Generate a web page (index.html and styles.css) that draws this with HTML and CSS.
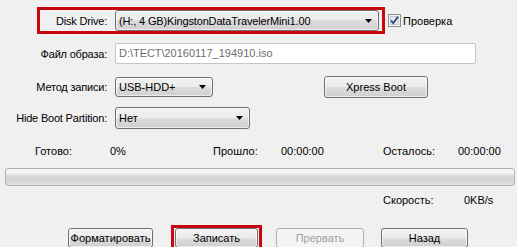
FILE: index.html
```html
<!DOCTYPE html>
<html lang="ru">
<head>
    <meta charset="UTF-8">
    <meta name="viewport" content="width=device-width, initial-scale=1.0">
    <title>Write Disk Image</title>
    <link rel="stylesheet" href="styles.css">
</head>
<body>
    <div class="window">
        <div class="row row-drive">
            <div class="frame">
                <span class="label label-short">Disk Drive:</span>
                <div class="combo combo-drive">
                    <span class="tight">(H:, 4 GB)KingstonDataTravelerMini1.00</span>
                    <svg class="arrow" width="7" height="4" viewBox="0 0 7 4"><path d="M0 0h7L3.5 4z"/></svg>
                </div>
            </div>
            <label class="check">
                <svg width="13" height="13" viewBox="0 0 13 13">
                    <rect x="0.5" y="0.5" width="12" height="12" fill="#f4f4f4" stroke="#8e8f8f"/>
                    <rect x="2.5" y="2.5" width="8" height="8" fill="#e8e8ea" stroke="#c3c6cb"/>
                    <path d="M3 6.5l2.2 2.5L10 2.8" fill="none" stroke="#21448c" stroke-width="1.8"/>
                </svg>
                <span>Проверка</span>
            </label>
        </div>

        <div class="row row-file">
            <span class="label">Файл образа:</span>
            <div class="textbox">D:\ТЕСТ\20160117_194910.iso</div>
        </div>

        <div class="row row-method">
            <span class="label">Метод записи:</span>
            <div class="combo combo-method">
                <span>USB-HDD+</span>
                <svg class="arrow" width="7" height="4" viewBox="0 0 7 4"><path d="M0 0h7L3.5 4z"/></svg>
            </div>
            <button class="btn btn-xpress">Xpress Boot</button>
        </div>

        <div class="row row-hide">
            <span class="label">Hide Boot Partition:</span>
            <div class="combo combo-hide">
                <span>Нет</span>
                <svg class="arrow" width="7" height="4" viewBox="0 0 7 4"><path d="M0 0h7L3.5 4z"/></svg>
            </div>
        </div>

        <div class="stats">
            <span>Готово:</span>
            <span>0%</span>
            <span>Прошло:</span>
            <span>00:00:00</span>
            <span>Осталось:</span>
            <span>00:00:00</span>
        </div>

        <div class="progress"></div>

        <div class="speed">
            <span>Скорость:</span>
            <span>0KB/s</span>
        </div>

        <div class="actions">
            <button class="btn btn-format">Форматировать</button>
            <div class="frame frame-btn">
                <button class="btn btn-write">Записать</button>
            </div>
            <button class="btn btn-abort" disabled>Прервать</button>
            <button class="btn btn-back">Назад</button>
        </div>
    </div>
</body>
</html>
```

FILE: styles.css
```css
* {
    margin: 0;
    padding: 0;
    box-sizing: border-box;
}
body {
    background-color: #f0f0f0;
    font-family: "Liberation Sans", Arial, sans-serif;
    font-size: 11px;
    color: #000;
}
.window {
    width: 517px;
    height: 247px;
    padding-top: 7px;
}
.row {
    display: flex;
    align-items: center;
}
.label {
    width: 107px;
    text-align: right;
    margin-right: 8px;
    white-space: nowrap;
    letter-spacing: -0.2px;
}
.label-short {
    width: 67px;
}
.tight {
    letter-spacing: -0.15px;
}
.frame {
    border: 3px solid #c8080e;
    display: flex;
    align-items: center;
}
.row-drive .frame {
    margin-left: 37px;
    width: 348px;
    height: 27px;
    padding-right: 3px;
}
.combo {
    display: flex;
    align-items: center;
    justify-content: space-between;
    border: 1px solid #707070;
    border-radius: 3px;
    padding: 0 6px 0 3px;
    background: linear-gradient(#f2f2f2 0%, #ebebeb 50%, #dddddd 50%, #cfcfcf 100%);
    box-shadow: inset 0 0 0 1px rgba(255, 255, 255, 0.6);
    white-space: nowrap;
}
.combo-drive {
    width: 264px;
    height: 21px;
}
.arrow {
    flex: none;
    fill: #000;
}
.check {
    display: flex;
    align-items: center;
    margin-left: 3px;
    gap: 2px;
}
.check svg {
    display: block;
}
.row-file {
    margin-top: 9px;
}
.textbox {
    width: 361px;
    height: 21px;
    line-height: 19px;
    padding-left: 3px;
    background-color: #fff;
    border: 1px solid #c5c5c5;
    border-radius: 2px;
    color: #6d6d6d;
    white-space: nowrap;
}
.row-method {
    margin-top: 12px;
    height: 22px;
}
.combo-method {
    width: 98px;
    height: 20px;
}
.btn {
    font-family: inherit;
    font-size: 11px;
    color: #000;
    border: 1px solid #707070;
    border-radius: 3px;
    background: linear-gradient(#f2f2f2 0%, #ebebeb 50%, #dddddd 50%, #cfcfcf 100%);
    box-shadow: inset 0 0 0 1px rgba(255, 255, 255, 0.6);
    height: 20px;
}
.btn-xpress {
    margin-left: 111px;
    width: 104px;
    height: 22px;
}
.row-hide {
    margin-top: 9px;
}
.combo-hide {
    width: 135px;
    height: 22px;
}
.stats {
    display: grid;
    grid-template-columns: 75px 103px 68px 102px 75px auto;
    padding-left: 35px;
    margin-top: 16px;
    height: 13px;
    line-height: 13px;
}
.progress {
    margin: 10px 0 0 5px;
    width: 510px;
    height: 18px;
    border: 1px solid #b2b2b2;
    border-radius: 3px;
    background: linear-gradient(#f6f6f6 0%, #f3f3f3 25%, #d9d9d9 45%, #d3d3d3 70%, #e4e4e4 100%);
}
.speed {
    display: grid;
    grid-template-columns: 81px auto;
    padding-left: 383px;
    margin-top: 8px;
    height: 13px;
    line-height: 13px;
}
.actions {
    display: flex;
    align-items: center;
    margin-top: 18px;
}
.btn-format {
    margin-left: 68px;
    width: 85px;
}
.frame-btn {
    margin-left: 18px;
    width: 91px;
    height: 26px;
    padding: 0 1px;
}
.btn-write {
    width: 83px;
}
.btn-abort {
    margin-left: 14px;
    width: 88px;
    color: #a0a0a0;
    border-color: #adb2b5;
    background: #f4f4f4;
    box-shadow: none;
}
.btn-back {
    margin-left: 17px;
    width: 87px;
}
```
